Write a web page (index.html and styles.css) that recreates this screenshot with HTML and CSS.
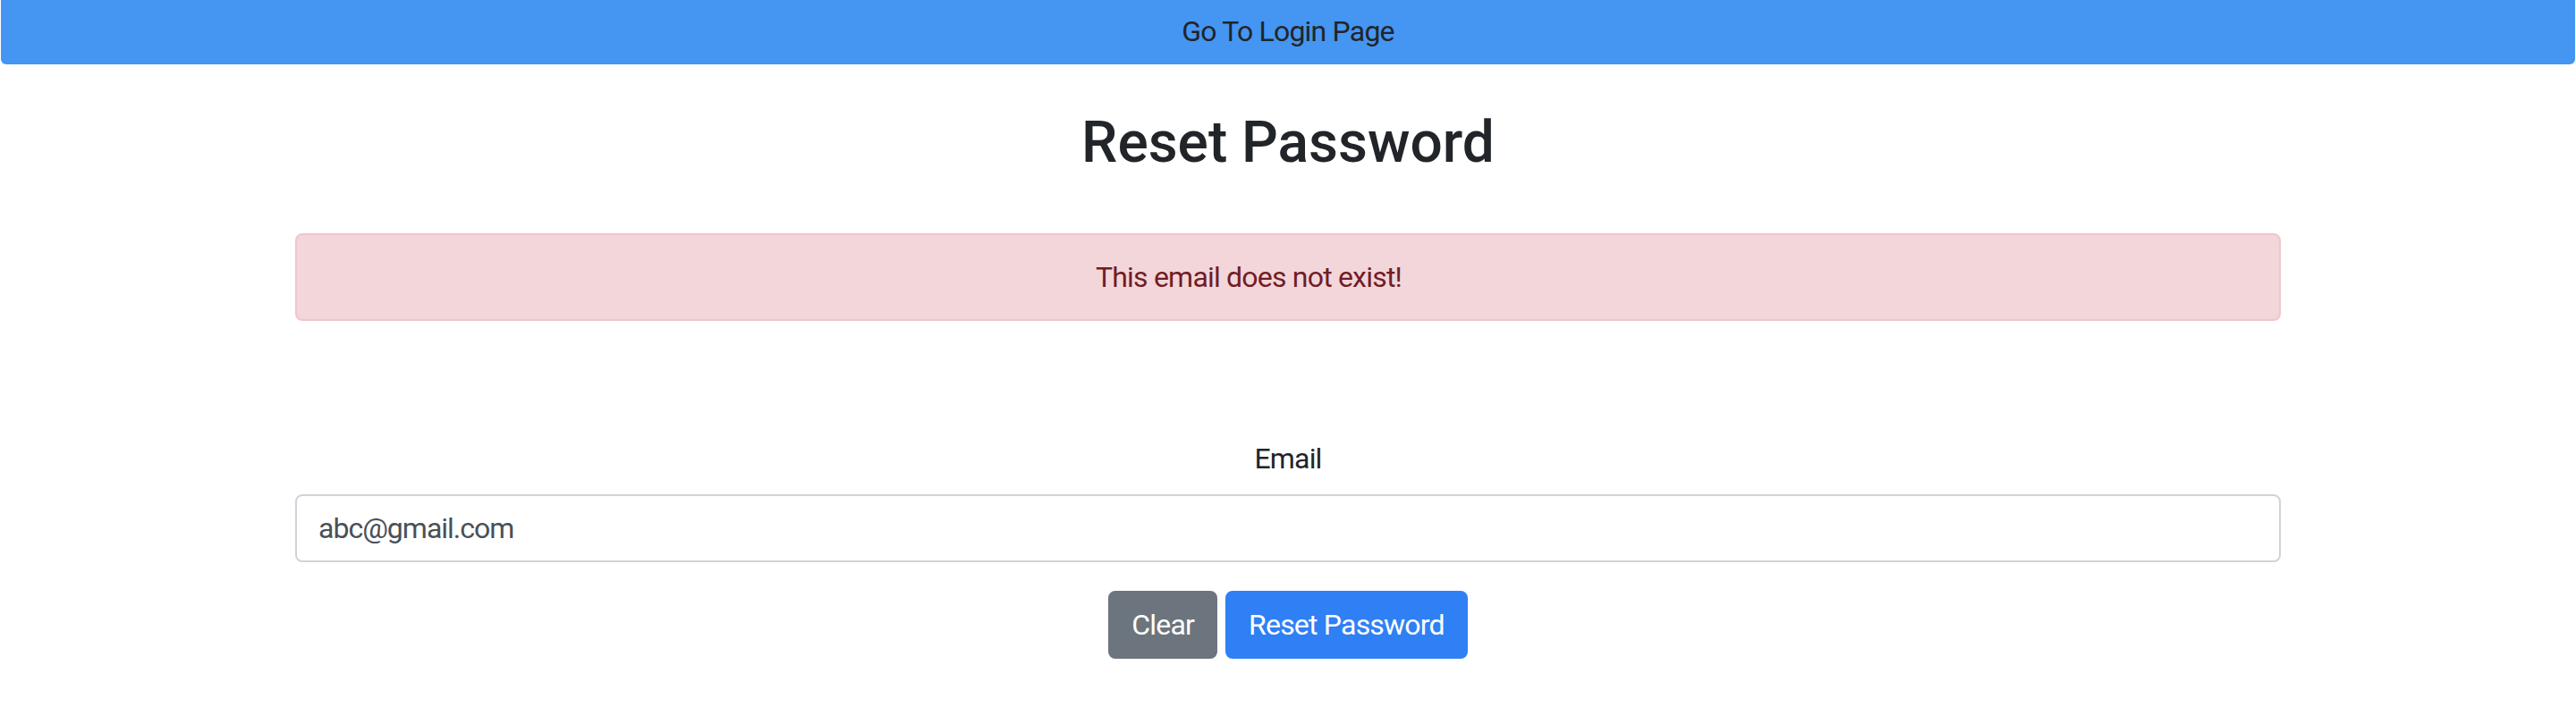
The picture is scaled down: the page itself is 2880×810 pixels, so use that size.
FILE: index.html
```html
<!DOCTYPE html>
<html lang="en">
<head>
<meta charset="utf-8">
<title>Reset Password</title>
<link rel="stylesheet" href="styles.css">
</head>
<body>
  <a class="topbar" href="#">Go To Login Page</a>
  <main class="container">
    <h2 class="title">Reset Password</h2>
    <div class="alert">This email does not exist!</div>
    <form class="form">
      <label class="label" for="email">Email</label>
      <input class="input" id="email" type="email" value="abc@gmail.com">
      <div class="actions">
        <button type="button" class="btn btn-secondary">Clear</button>
        <button type="button" class="btn btn-primary">Reset Password</button>
      </div>
    </form>
  </main>
</body>
</html>
```
FILE: styles.css
```css
* { box-sizing: border-box; }

html, body {
  margin: 0;
  padding: 0;
  background: #ffffff;
}

body {
  font-family: Roboto, "Liberation Sans", sans-serif;
  font-size: 32px;
  line-height: 1.5;
  color: #212529;
  letter-spacing: -0.8px;
}

.topbar {
  display: block;
  margin: 0 1px;
  height: 72px;
  line-height: 70px;
  background: #4595f2;
  color: #212529;
  text-align: center;
  text-decoration: none;
  border-radius: 0 0 6px 6px;
}

.container {
  width: 2220px;
  margin: 0 auto;
  text-align: center;
}

.title {
  margin: 50px 0 0;
  font-size: 64px;
  font-weight: 500;
  line-height: 1.2;
  height: 77px;
  letter-spacing: 0;
}

.alert {
  margin-top: 62px;
  padding: 23px 128px 23px 40px;
  background: #f3d6da;
  border: 2px solid #f0c5cb;
  border-radius: 8px;
  color: #721c24;
  line-height: 48px;
}

.form {
  margin-top: 130px;
  display: flex;
  flex-direction: column;
  align-items: stretch;
}

.label {
  display: block;
  line-height: 48px;
  margin-bottom: 16px;
}

.input {
  display: block;
  width: 100%;
  height: 76px;
  padding: 0 24px;
  border: 2px solid #ced4da;
  border-radius: 8px;
  font: inherit;
  letter-spacing: -1px;
  color: #495057;
  background: #fff;
  outline: none;
}

.actions {
  margin-top: 32px;
  display: flex;
  justify-content: center;
  gap: 9px;
}

.btn {
  font: inherit;
  letter-spacing: -0.8px;
  line-height: 48px;
  padding: 12px 24px;
  border: 2px solid transparent;
  border-radius: 8px;
  color: #ffffff;
  cursor: pointer;
}

.btn-secondary {
  background: #6c757d;
  border-color: #6c757d;
}

.btn-primary {
  background: #2f80f5;
  border-color: #2f80f5;
}
```
